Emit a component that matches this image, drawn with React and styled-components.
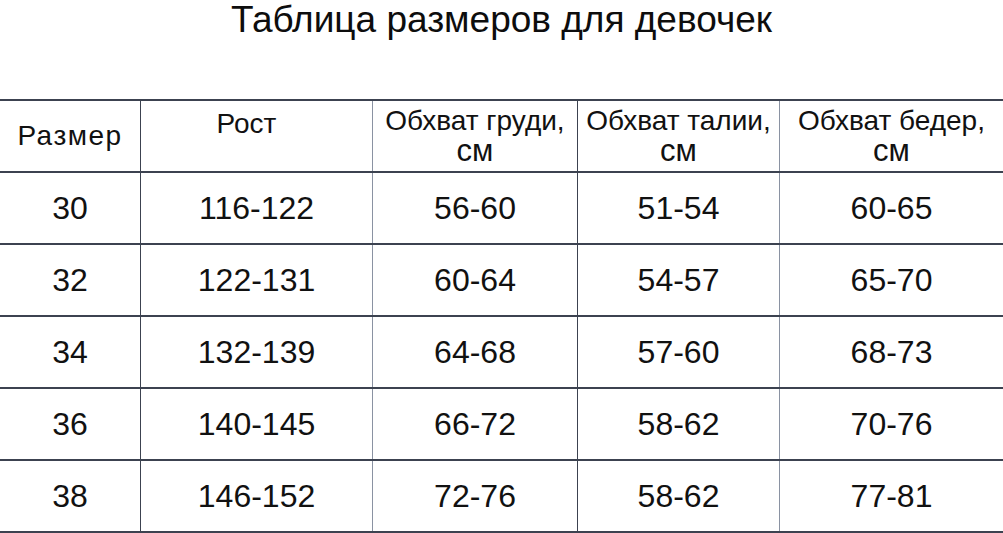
import React from 'react';
import styled, { createGlobalStyle } from 'styled-components';

const GlobalStyle = createGlobalStyle`
  body {
    margin: 0;
    background: #fff;
    font-family: "Liberation Sans", Arial, sans-serif;
    color: #111;
  }
`

const Page = styled.div`
  width: 1003px;
  height: 533px;
  overflow: hidden;
  background: #fff;
`

const Title = styled.h1`
  margin: 0;
  height: 99px;
  text-align: center;
  font-weight: normal;
  font-size: 37px;
  line-height: 40px;
  color: #0d0d0d;
`

const Table = styled.div`
  display: flex;
  flex-direction: column;
  border-bottom: 2px solid #3c4250;
`

const Row = styled.div`
  display: grid;
  grid-template-columns: 140px 232px 205px 202px 1fr;
  height: 72px;
  border-top: 2px solid #3c4250;
  box-sizing: border-box;
`

const Cell = styled.div`
  display: flex;
  justify-content: center;
  align-items: ${p => p.$top ? 'flex-start' : 'center'};
  padding-top: ${p => p.$top ? '8px' : '0'};
  padding-right: ${p => p.$shift ? `${p.$shift}px` : '0'};
  text-align: center;
  border-left: ${p => p.$line ? `1.5px solid ${p.$line}` : 'none'};
  font-size: ${p => p.$head ? '28px' : '32px'};
  line-height: ${p => p.$head ? '30px' : '36px'};
  letter-spacing: ${p => p.$spread ? `${p.$spread}px` : 'normal'};
  box-sizing: border-box;
  white-space: nowrap;
`

const HeadText = styled.div`
  display: flex;
  flex-direction: column;
  align-items: center;
`

const Unit = styled.span`
  display: block;
  font-size: 31px;
  line-height: 30px;
`

const lines = [null, '#3c4250', '#8a92a2', '#3c4250', '#8a92a2'];

const head = [
  { t: 'Размер', spread: 1.5 },
  { t: 'Рост', top: true, shift: 20 },
  { t: 'Обхват груди,', unit: 'см' },
  { t: 'Обхват талии,', unit: 'см' },
  { t: 'Обхват бедер,', unit: 'см' },
];

const rows = [
  ['30', '116-122', '56-60', '51-54', '60-65'],
  ['32', '122-131', '60-64', '54-57', '65-70'],
  ['34', '132-139', '64-68', '57-60', '68-73'],
  ['36', '140-145', '66-72', '58-62', '70-76'],
  ['38', '146-152', '72-76', '58-62', '77-81'],
];

export default function App() {
  return (
    <Page>
      <GlobalStyle />
      <Title>Таблица размеров для девочек</Title>
      <Table>
        <Row>
          {head.map((h, i) => (
            <Cell key={i} $head $top={h.top} $shift={h.shift} $spread={h.spread} $line={lines[i]}>
              <HeadText>
                <span>{h.t}</span>
                {h.unit && <Unit>{h.unit}</Unit>}
              </HeadText>
            </Cell>
          ))}
        </Row>
        {rows.map((r, ri) => (
          <Row key={ri}>
            {r.map((v, i) => (
              <Cell key={i} $line={lines[i]}>{v}</Cell>
            ))}
          </Row>
        ))}
      </Table>
    </Page>
  );
}
